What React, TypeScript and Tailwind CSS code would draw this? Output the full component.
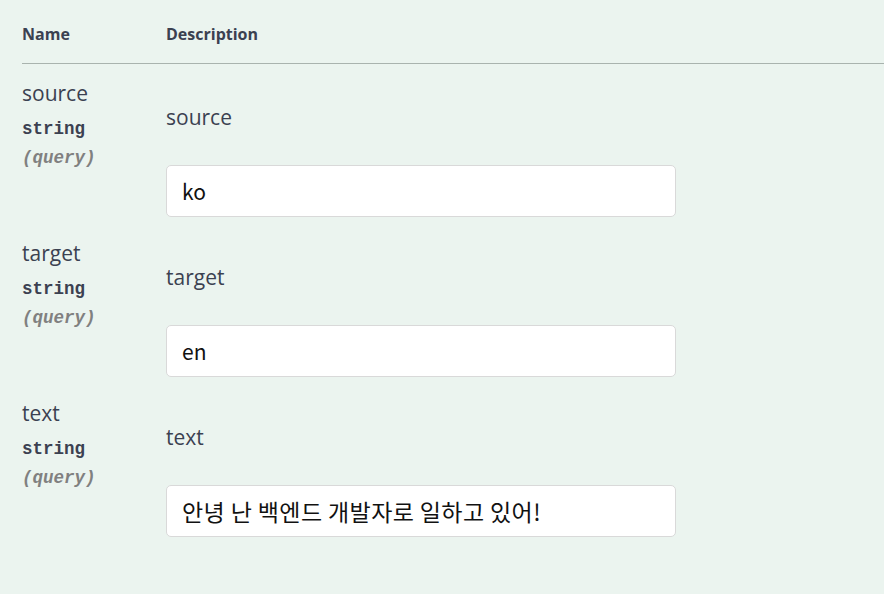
import { useState } from "react";

type Param = { name: string; value: string };

const initial: Param[] = [
  { name: "source", value: "ko" },
  { name: "target", value: "en" },
  { name: "text", value: "안녕 난 백엔드 개발자로 일하고 있어!" },
];

const sans = "font-['Open_Sans','Noto_Sans_CJK_KR',sans-serif]";
const mono = "font-['Liberation_Mono','Courier_New',monospace]";

// Hangul renders a bit smaller in Noto than in the reference font
const hasHangul = (s: string) => /[\uac00-\ud7a3]/.test(s);

export default function App() {
  const [params, setParams] = useState(initial);

  return (
    <div className={`min-h-screen w-full bg-[#ebf4ef] pl-[22px] text-[#3b4151] ${sans}`}>
      <div className="flex h-[64px] border-b border-[#a9b3ae] pt-[24px]">
        <div className="w-[144px] text-[16px] font-bold leading-[20px]">Name</div>
        <div className="text-[16px] font-bold leading-[20px]">Description</div>
      </div>

      {params.map((p, i) => (
        <div key={p.name} className="flex h-[160px]">
          <div className="w-[144px] pt-[15px]">
            <div className="text-[21px] leading-[28px]">{p.name}</div>
            <div className={`mt-[10px] text-[17.5px] font-bold leading-[24px] ${mono}`}>string</div>
            <div className={`mt-[5px] text-[17.5px] font-bold italic leading-[24px] text-[#808080] ${mono}`}>
              (query)
            </div>
          </div>
          <div className="pt-[39px]">
            <div className="text-[21px] leading-[28px]">{p.name}</div>
            <input
              type="text"
              value={p.value}
              onChange={(e) =>
                setParams(params.map((q, j) => (j === i ? { ...q, value: e.target.value } : q)))
              }
              className={`mt-[34px] h-[52px] w-[510px] rounded-[5px] border border-[#d9d9d9] bg-white px-[15px] text-[#111] outline-none font-['Noto_Sans_CJK_KR','Open_Sans',sans-serif] ${
                hasHangul(p.value) ? "text-[23px] tracking-[0.4px]" : "text-[21px]"
              }`}
            />
          </div>
        </div>
      ))}
    </div>
  );
}
